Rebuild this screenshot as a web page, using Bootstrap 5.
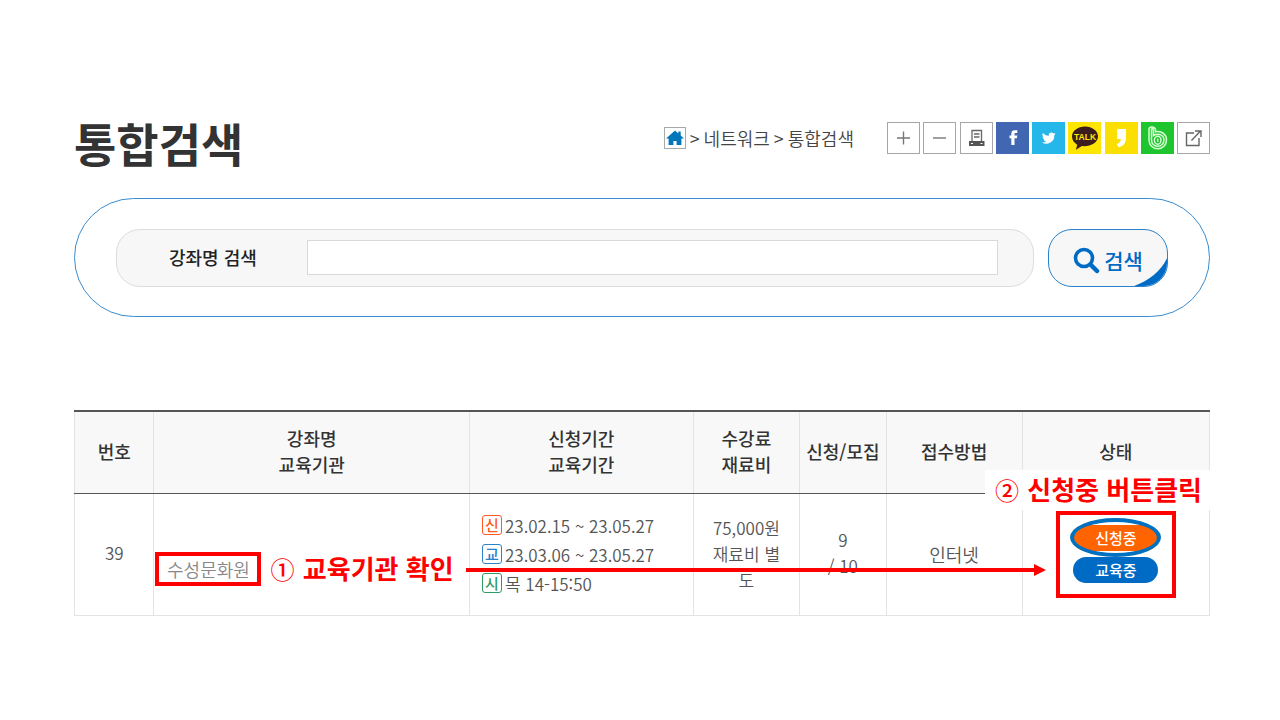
<!DOCTYPE html>
<html lang="ko">
<head>
<meta charset="utf-8">
<meta name="viewport" content="width=device-width, initial-scale=1">
<title>통합검색</title>
<link href="https://cdn.jsdelivr.net/npm/bootstrap@5.3.0/dist/css/bootstrap.min.css" rel="stylesheet">
<style>
  :root { --blue: #006bc5; --line: #e3e3e3; --dark: #333; }
  body { font-family: "Noto Sans CJK KR", sans-serif; font-size: 18px; line-height: 26px; color: #555; background: #fff; }
  .page { padding: 110px 70px 0 74px; }
  .page-title { font-size: 46px; line-height: 64px; font-weight: 700; color: var(--dark); }
  .crumbs { gap: 4px; height: 32px; margin-top: 12px; margin-right: 33px; color: #444; font-weight: 350; }
  .crumbs a { color: inherit; text-decoration: none; }
  .crumbs .home { width: 22px; height: 22px; border: 1px solid #aaa; }
  .crumbs svg { display: block; }
  .tools { width: 323px; margin-top: 12px; }
  .tool { width: 33px; height: 32px; padding: 0; border: 1px solid #a6a6a6; background: #fff; }
  .tool svg { display: block; width: 31px; height: 30px; }
  .tool.brand { border: 0; }
  .tool.brand svg { width: 33px; height: 32px; }
  .search-panel { margin-top: 24px; padding: 30px 41px 29px 41px; border: 1px solid #3a8dd0; border-radius: 60px; gap: 14px; }
  .search-field { height: 58px; padding: 0 35px 2px 52px; background: #f7f7f7; border: 1px solid #ddd; border-radius: 24px; }
  .search-field label { width: 138px; font-size: 18px; font-weight: 500; color: #222; }
  .search-field input { height: 35px; border: 1px solid #d9d9d9; border-radius: 0; }
  .search-btn { width: 120px; height: 58px; padding: 4px 0 0; gap: 4px; background: #f7f7f7; border: 1px solid #2a82cb; border-radius: 24px; color: var(--blue); font-size: 21px; font-weight: 500; overflow: hidden; }
  .search-btn .curl { right: -1px; bottom: -1px; }
  .results { margin-top: 93px; }
  .course-table { width: 100%; table-layout: fixed; border-collapse: collapse; border-top: 2px solid #555; }
  .course-table th, .course-table td { border: 1px solid var(--line); text-align: center; vertical-align: middle; padding: 0; }
  .course-table th { height: 82px; padding-bottom: 2px; background: #f8f8f8; color: var(--dark); font-weight: 500; border-top: 2px solid #555; border-bottom: 1px solid #555; }
  .course-table td { height: 122px; font-weight: 350; }
  .c-no { width: 7%; } .c-name { width: 27.8%; } .c-date { width: 19.7%; } .c-fee { width: 9.4%; }
  .c-cap { width: 7.6%; } .c-way { width: 12%; } .c-state { width: 16.5%; }
  .course-table .count { font-size: 17px; padding-bottom: 2px; }
  .course-table .fee { padding: 0 14px; word-break: break-all; font-size: 17px; }
  .course-table .dates { padding-left: 12px; text-align: left; }
  .dates .line-item { line-height: 29px; gap: 3px; font-size: 17px; }
  .tag { width: 20px; height: 20px; border: 1px solid; border-radius: 3px; font-size: 15px; line-height: 17px; font-weight: 500; text-align: center; }
  .tag-apply { color: #ff5a1f; } .tag-study { color: #2a82cb; } .tag-time { color: #2d9b66; }
  .org-box { width: 106px; height: 34px; margin: 29px 0 0 1px; border: 4px solid #f00; line-height: 26px; text-align: center; }
  .org-box a { color: #888; text-decoration: none; }
  .state-box { width: 120px; height: 87px; margin: 0 auto; border: 4px solid #f00; gap: 6px; padding-bottom: 1px; }
  .pill { width: 85px; height: 26px; padding: 0; border: 0; border-radius: 13px; color: #fff; font-size: 15px; line-height: 26px; font-weight: 500; }
  .pill-apply { background: #ff6400; } .pill-study { background: var(--blue); }
  .ring { left: -3px; top: -7px; width: 91px; height: 39px; border: 4px solid #0070c0; border-radius: 50%; pointer-events: none; }
  .note { color: #f00; font-size: 26px; line-height: 39px; font-weight: 700; white-space: pre; }
  .note .num { font-size: 24px; font-weight: 500; margin-right: 1px; }
  .note-org { left: 17.3%; right: 14.4%; top: 140px; gap: 12px; }
  .note-org .caption { line-height: 36px; padding-bottom: 3px; }
  .note-apply { right: -10px; top: 60px; padding: 0 18px 2px 10px; line-height: 37px; background: #fff; }
  .arrow-line { height: 4px; background: #f00; }
  .arrow-head { border-left: 12px solid #f00; border-top: 6px solid transparent; border-bottom: 6px solid transparent; }
</style>
</head>
<body>
<main class="page">
  <header class="d-flex align-items-start">
    <h1 class="page-title m-0 me-auto">통합검색</h1>
    <nav class="crumbs d-flex align-items-center" aria-label="현재 위치">
      <a class="home" href="#" aria-label="홈"><svg width="20" height="20" viewBox="0 0 20 20"><path fill="#0077b8" d="M10 2.500 1 10.600h2.600V17h4.800v-4h3.200v4h4.800v-6.400H19L15.700 7.600V3.500h-2.400v2z"/></svg></a>
      <span>&gt;</span><a href="#">네트워크</a><span>&gt;</span><a href="#">통합검색</a>
    </nav>
    <div class="tools d-flex justify-content-between">
      <button class="tool" type="button" aria-label="확대"><svg viewBox="0 0 31 30"><path d="M9 15h13M15.500 8.500v13" stroke="#777" stroke-width="1.400"/></svg></button>
      <button class="tool" type="button" aria-label="축소"><svg viewBox="0 0 31 30"><path d="M9 15h13" stroke="#777" stroke-width="1.400"/></svg></button>
      <button class="tool" type="button" aria-label="인쇄"><svg viewBox="0 0 31 30"><path d="M11 18V7.500h9.500V18M13 11h5.500M13 14h5.500" fill="none" stroke="#666" stroke-width="1.300"/><path fill="#555" d="M8 18h15.500v5H8z"/><path fill="#fff" d="M10 20h2v1h-2zM19.500 20h2v1h-2z"/></svg></button>
      <button class="tool brand" type="button" aria-label="페이스북"><svg viewBox="0 0 33 32"><path fill="#4267b2" d="M0 0h33v32H0z"/><path fill="#fff" d="M15.300 23v-6.700H13.500v-2.800h1.800v-1.700c0-2.500 1.200-3.600 3.500-3.600h2.500v2.800h-1.600c-.9 0-1.200.4-1.200 1.200v1.300H21.300l-.4 2.800h-2.400V23z"/></svg></button>
      <button class="tool brand" type="button" aria-label="트위터"><svg viewBox="0 0 33 32"><path fill="#25b6ea" d="M0 0h33v32H0z"/><path fill="#fff" transform="translate(9.500 9) scale(.6)" d="M23.600 4.700a9 9 0 0 1-2.700.8 4.700 4.700 0 0 0 2-2.600 9 9 0 0 1-2.900 1.100 4.700 4.700 0 0 0-8 4.300A13.300 13.300 0 0 1 2.300 3.400a4.700 4.700 0 0 0 1.500 6.200 5 5 0 0 1-2.100-.6c0 2.200 1.500 4.200 3.700 4.700a5 5 0 0 1-2.100.1 4.700 4.700 0 0 0 4.400 3.200A9.500 9.500 0 0 1 .8 19a13.300 13.300 0 0 0 20.500-12 9 9 0 0 0 2.300-2.300z"/></svg></button>
      <button class="tool brand" type="button" aria-label="카카오톡"><svg viewBox="0 0 33 32"><path fill="#ffe600" d="M0 0h33v32H0z"/><path fill="#3c1e1e" d="M17 4.500c-7.200 0-13 4.400-13 10 0 3.700 2 6.200 5.200 8.200l-1.300 5 6-3.600c9 .7 16.100-3.700 16.100-9.600 0-5.600-5.800-10-13-10z"/><text x="17" y="17.500" text-anchor="middle" fill="#ffe600" font-family="Liberation Sans, sans-serif" font-size="8.500" font-weight="700">TALK</text></svg></button>
      <button class="tool brand" type="button" aria-label="카카오스토리"><svg viewBox="0 0 33 32"><path fill="#fbdf00" d="M0 0h33v32H0z"/><path fill="#fff" d="M12 7h9v8.500c0 5.500-2.400 8.700-7.300 9.700l-2-3.200c2.700-.8 4-2.400 4.200-5H12z"/></svg></button>
      <button class="tool brand" type="button" aria-label="밴드"><svg viewBox="0 0 33 32"><path fill="#1fc52e" d="M0 0h33v32H0z"/><g fill="none" stroke="#d9ffd5" stroke-width="1.500"><path d="M8 18V7.300c0-3.200 5.400-3.200 6.500 0v2.500c6.300-1.200 11 2.700 11 8.200 0 5-3.900 8.700-8.800 8.700S8 23 8 18z"/><path d="M10.500 18V7.500c.6-1.500 2-1.200 2 .5v5.500c5.500-3.200 10.500 0 10.500 4.500 0 3.600-2.700 6.200-6.300 6.200S10.500 21.600 10.500 18z"/><ellipse cx="16.700" cy="18.200" rx="3.300" ry="4"/><path d="M16.700 16.500v3.500"/></g></svg></button>
      <button class="tool" type="button" aria-label="새 창"><svg viewBox="0 0 31 30"><path d="M16 10H8.500v12.500H21V15M13.500 17.500l9-9.500M17 8h6v6" fill="none" stroke="#666" stroke-width="1.400"/></svg></button>
    </div>
  </header>

  <form class="search-panel d-flex">
    <div class="search-field d-flex align-items-center flex-grow-1">
      <label class="flex-shrink-0" for="course">강좌명 검색</label>
      <input class="form-control" id="course" type="text">
    </div>
    <button class="search-btn position-relative d-flex flex-shrink-0 align-items-center justify-content-center" type="button">
      <svg class="curl position-absolute" width="37" height="31" viewBox="0 0 37 31"><path fill="#006bc5" d="M37 0v31H0C17 26 31 15 37 0z"/></svg>
      <svg width="27" height="27" viewBox="0 0 27 27" fill="none" stroke="#006bc5"><circle cx="11" cy="11" r="8.500" stroke-width="3.600"/><path d="m18 18 6 6" stroke-width="4.500" stroke-linecap="round"/></svg>
      <span>검색</span>
    </button>
  </form>

  <section class="results position-relative">
    <table class="course-table">
      <thead>
        <tr>
          <th class="c-no">번호</th><th class="c-name">강좌명<br>교육기관</th><th class="c-date">신청기간<br>교육기간</th>
          <th class="c-fee">수강료<br>재료비</th><th class="c-cap">신청/모집</th><th class="c-way">접수방법</th><th class="c-state">상태</th>
        </tr>
      </thead>
      <tbody>
        <tr>
          <td class="count">39</td>
          <td><div class="org-box"><a href="#">수성문화원</a></div></td>
          <td class="dates">
            <div class="line-item d-flex align-items-center"><span class="tag tag-apply">신</span>23.02.15 ~ 23.05.27</div>
            <div class="line-item d-flex align-items-center"><span class="tag tag-study">교</span>23.03.06 ~ 23.05.27</div>
            <div class="line-item d-flex align-items-center"><span class="tag tag-time">시</span>목 14-15:50</div>
          </td>
          <td class="fee">75,000원<br>재료비 별도</td>
          <td class="count">9<br>/ 10</td>
          <td>인터넷</td>
          <td>
            <div class="state-box d-flex flex-column align-items-center justify-content-center">
              <div class="position-relative d-flex"><button class="pill pill-apply" type="button">신청중</button><span class="ring position-absolute"></span></div>
              <button class="pill pill-study" type="button">교육중</button>
            </div>
          </td>
        </tr>
      </tbody>
    </table>
    <div class="note note-org position-absolute d-flex align-items-center">
      <span class="caption"><span class="num">①</span> 교육기관 확인</span>
      <span class="d-flex align-items-center flex-grow-1"><span class="arrow-line flex-grow-1"></span><span class="arrow-head"></span></span>
    </div>
    <div class="note note-apply position-absolute"><span class="num">②</span> 신청중 버튼클릭</div>
  </section>
</main>
<script src="https://cdn.jsdelivr.net/npm/bootstrap@5.3.0/dist/js/bootstrap.bundle.min.js"></script>
</body>
</html>
